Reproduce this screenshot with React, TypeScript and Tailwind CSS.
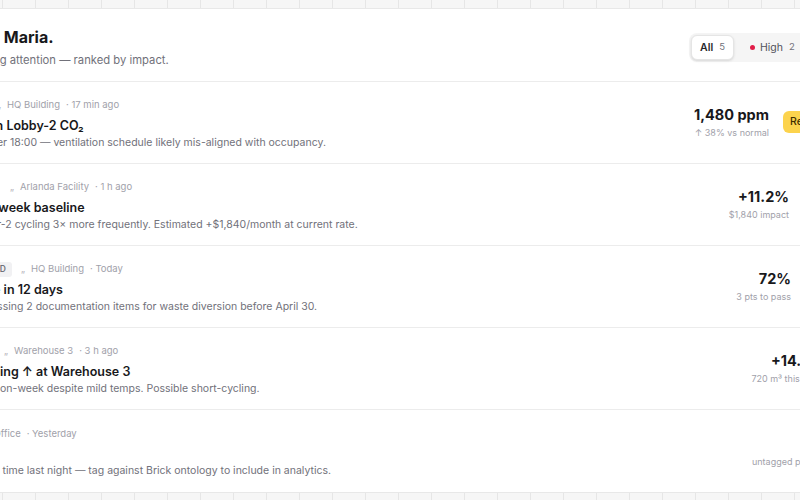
type Signal = {
  id: number;
  severity: string;
  sevColor: string;
  category?: string;
  metaW: string;
  metaAlign: string;
  site: string;
  time: string;
  title: string;
  desc: string;
  value: string;
  sub: string;
  action: string;
  actionW: string;
  primary?: boolean;
};

const signals: Signal[] = [
  {
    id: 1,
    severity: 'High',
    sevColor: 'bg-[#e11d48]',
    category: 'IAQ',
    metaW: 'w-[85px]',
    metaAlign: 'justify-start',
    site: 'HQ Building',
    time: '· 17 min ago',
    title: 'Sustained rise in Lobby-2 CO₂',
    desc: 'Rises every day after 18:00 — ventilation schedule likely mis-aligned with occupancy.',
    value: '1,480 ppm',
    sub: '↑ 38% vs normal',
    action: 'Review',
    actionW: 'w-[67px]',
    primary: true,
  },
  {
    id: 2,
    severity: 'High',
    sevColor: 'bg-[#e11d48]',
    category: 'ENERGY',
    metaW: 'w-[98px]',
    metaAlign: 'justify-start',
    site: 'Arlanda Facility',
    time: '· 1 h ago',
    title: 'Power above 4-week baseline',
    desc: 'Since Friday, Chiller-2 cycling 3× more frequently. Estimated +$1,840/month at current rate.',
    value: '+11.2%',
    sub: '$1,840 impact',
    action: 'Open',
    actionW: 'w-[47px]',
  },
  {
    id: 3,
    severity: 'Med',
    sevColor: 'bg-[#f59e0b]',
    category: 'LEED',
    metaW: 'w-[109px]',
    metaAlign: 'justify-between',
    site: 'HQ Building',
    time: '· Today',
    title: 'LEED audits due in 12 days',
    desc: 'Your package is missing 2 documentation items for waste diversion before April 30.',
    value: '72%',
    sub: '3 pts to pass',
    action: 'Plan',
    actionW: 'w-[45px]',
  },
  {
    id: 4,
    severity: 'Med',
    sevColor: 'bg-[#f59e0b]',
    category: 'WATER',
    metaW: 'w-[92px]',
    metaAlign: 'justify-start',
    site: 'Warehouse 3',
    time: '· 3 h ago',
    title: 'Water use climbing ↑ at Warehouse 3',
    desc: 'Flow up 14% week-on-week despite mild temps. Possible short-cycling.',
    value: '+14.2%',
    sub: '720 m³ this week',
    action: '›',
    actionW: 'w-[11px]',
  },
  {
    id: 5,
    severity: 'Low',
    sevColor: 'bg-[#a1a1aa]',
    metaW: 'w-[47px]',
    metaAlign: 'justify-start',
    site: 'Main Office',
    time: '· Yesterday',
    title: '9 new points',
    desc: 'Noticed for the first time last night — tag against Brick ontology to include in analytics.',
    value: '9',
    sub: 'untagged points',
    action: '›',
    actionW: 'w-[15px]',
  },
];

export default function App() {
  return (
    <div className="w-[800px] h-[500px] overflow-hidden bg-[#f6f6f6] bg-[linear-gradient(to_right,#e6e6e6_1px,transparent_1px)] bg-[size:33px_33px] bg-[position:2px_0] pt-[8px] font-['Inter',sans-serif]">
      <div className="ml-[-160px] w-[1100px] bg-white border-y border-[#e8e8e8]">
        {/* cabecera */}
        <div className="flex justify-between items-center pl-[52px] pr-[65px] pt-[17px] pb-[13px] border-b border-[#ececec]">
          <div>
            <h1 className="text-[16px] leading-[22px] font-bold text-[#18181b]">Good evening Maria.</h1>
            <p className="mt-[4px] text-[11.25px] leading-[16px] text-[#71717a]">
              5 live signals needing attention — ranked by impact.
            </p>
          </div>
          <div className="flex items-center bg-[#f5f5f5] rounded-lg p-[2px] mt-[1px]">
            <button className="w-[43px] h-[25px] flex items-center justify-center gap-[6px] bg-white rounded-md border border-[#e5e5e5] shadow-sm">
              <span className="text-[10.5px] font-semibold text-[#27272a]">All</span>
              <span className="text-[9.5px] text-[#71717a]">5</span>
            </button>
            <button className="w-[67px] h-[25px] flex items-center pl-[16px] gap-[5px]">
              <span className="w-[5px] h-[5px] rounded-full bg-[#e11d48]" />
              <span className="text-[10.5px] text-[#52525b]">High</span>
              <span className="text-[9.5px] text-[#71717a] ml-[1px]">2</span>
            </button>
            <button className="w-[72px] h-[25px] flex items-center pl-[8px] gap-[5px]">
              <span className="w-[5px] h-[5px] rounded-full bg-[#f59e0b]" />
              <span className="text-[10.5px] text-[#52525b]">Medium</span>
              <span className="text-[9.5px] text-[#71717a] ml-[1px]">2</span>
            </button>
          </div>
        </div>

        {signals.map((s, i) => (
          <div
            key={s.id}
            className={`flex justify-between items-center pl-[63px] pr-[90px] pt-[16px] pb-[13px] h-[82px] ${
              i < signals.length - 1 ? 'border-b border-[#ececec]' : ''
            }`}
          >
            <div className="min-w-0">
              <div className="flex items-center h-[16px] text-[9.5px] text-[#a1a1aa] whitespace-nowrap">
                <div className={`${s.metaW} shrink-0 flex items-center gap-[6px] ${s.metaAlign}`}>
                  <span className="flex items-center gap-[4px] text-[8.5px] font-semibold text-[#52525b]">
                    <span className={`w-[5px] h-[5px] rounded-full ${s.sevColor}`} />
                    {s.severity}
                  </span>
                  {s.category && (
                    <span className="h-[15px] px-[6px] flex items-center rounded-[3px] bg-[#f1f1f3] text-[8.5px] font-semibold text-[#71717a]">
                      {s.category}
                    </span>
                  )}
                </div>
                <span className="ml-[9px] text-[#b4b4bb]">„</span>
                <span className="ml-[6px]">{s.site}</span>
                <span className="ml-[6px]">{s.time}</span>
              </div>
              <div className="mt-[3px] text-[12.5px] leading-[18px] font-semibold text-[#18181b] whitespace-nowrap">
                {s.title}
              </div>
              <div className="text-[10.5px] leading-[16px] text-[#71717a] whitespace-nowrap">{s.desc}</div>
            </div>
            <div className="flex items-center gap-[14px] shrink-0 mb-[4px]">
              <div className="text-right whitespace-nowrap">
                <div className="text-[14.5px] leading-[19px] font-bold text-[#18181b]">{s.value}</div>
                <div className="mt-[3px] text-[9px] leading-[12px] text-[#a1a1aa]">{s.sub}</div>
              </div>
              <button
                className={`${s.actionW} h-[22px] rounded-md text-[10.5px] font-medium text-left ${
                  s.primary ? 'bg-[#fcd34d] text-[#3f2d00] pl-[7px]' : 'text-[#71717a] pl-[2px]'
                }`}
              >
                {s.action}
              </button>
            </div>
          </div>
        ))}
      </div>
    </div>
  );
}
